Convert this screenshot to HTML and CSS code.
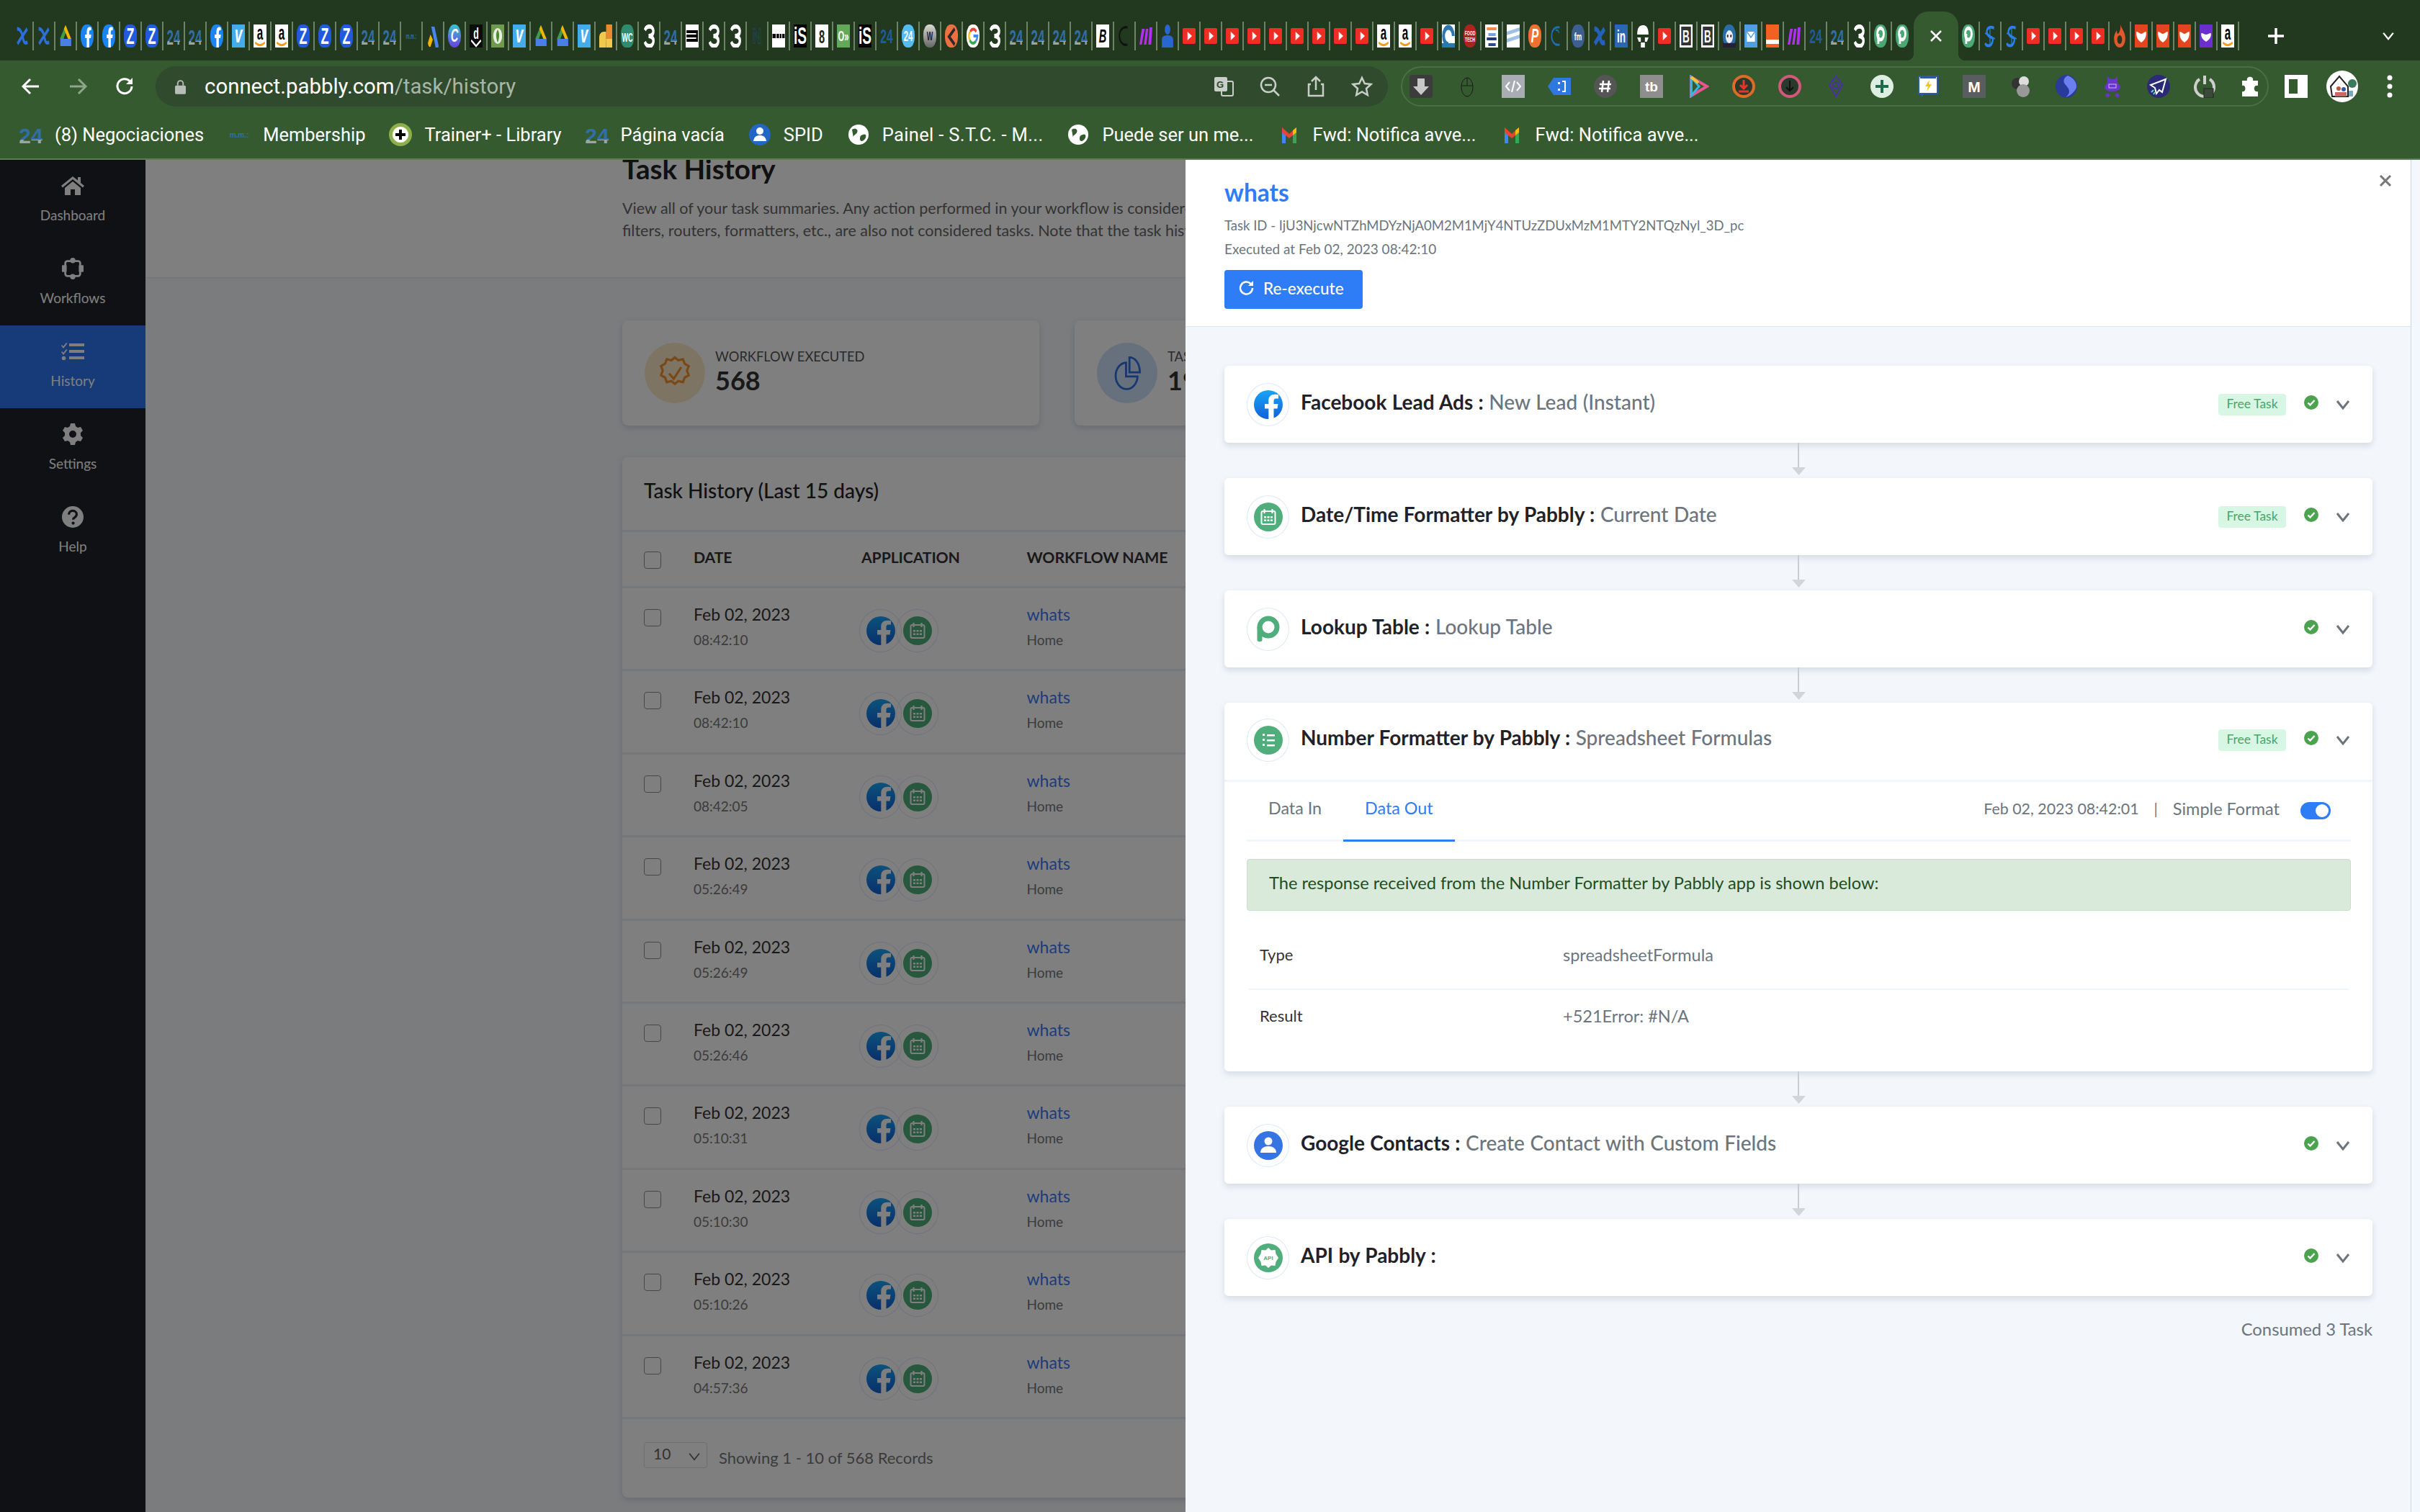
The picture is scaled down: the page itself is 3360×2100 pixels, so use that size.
FILE: index.html
```html
<!DOCTYPE html>
<html lang="en">
<head>
<meta charset="utf-8">
<title>Task History</title>
<link rel="stylesheet" href="styles.css">
</head>
<body>
<svg class="sprite" aria-hidden="true">
<defs>
<linearGradient id="gfb" x1="0" y1="0" x2="0" y2="1"><stop offset="0" stop-color="#18a4f8"/><stop offset="1" stop-color="#1260d8"/></linearGradient>
<linearGradient id="g24" x1="0" y1="0" x2="0" y2="1"><stop offset="0.66" stop-color="#2f6ea8"/><stop offset="0.67" stop-color="#9aa6a0"/></linearGradient>
<linearGradient id="gcv" x1="0" y1="0" x2="0" y2="1"><stop offset="0" stop-color="#38c5d0"/><stop offset="1" stop-color="#6b3fe0"/></linearGradient>
<linearGradient id="gsv" x1="0" y1="0" x2="0" y2="1"><stop offset="0" stop-color="#d8d8d8"/><stop offset="1" stop-color="#666"/></linearGradient>
<symbol id="xp" viewBox="0 0 32 32" preserveAspectRatio="none"><path d="M3 6c10 0 13 8 15 14s5 6 11 5M28 6C20 13 11 20 4 27" fill="none" stroke="#2c6fd9" stroke-width="5"/></symbol>
<symbol id="drive" viewBox="0 0 32 32" preserveAspectRatio="none"><path d="M16 1 2 20h9L20 6z" fill="#3f9b45"/><path d="M16 1 30 20h-8L12 6z" fill="#f4b400"/><path d="M3 20H30V30H3z" fill="#4a7fe8"/></symbol>
<symbol id="fb" viewBox="0 0 32 32" preserveAspectRatio="none"><rect width="32" height="32" rx="14" fill="#1b84f2"/><path d="M21 32V19h4l1-5h-5v-3c0-2 1-3 3-3h2V4c-1 0-3-.4-4-.4-4 0-7 2.400-7 7V14h-4v5h4v13z" fill="#fff"/></symbol>
<symbol id="zz" viewBox="0 0 32 32" preserveAspectRatio="none"><rect width="32" height="32" rx="12" fill="#2259df"/><text x="16" y="27" class="sb" font-size="32" text-anchor="middle" fill="#fff">Z</text></symbol>
<symbol id="b24" viewBox="0 0 32 32" preserveAspectRatio="none"><text x="16" y="28" class="sb" font-size="30" text-anchor="middle" fill="url(#g24)">24</text></symbol>
<symbol id="vv" viewBox="0 0 32 32" preserveAspectRatio="none"><rect width="32" height="32" fill="#45acea"/><text x="16" y="25" class="sb si" font-size="34" text-anchor="middle" fill="#fff">v</text></symbol>
<symbol id="amz" viewBox="0 0 32 32" preserveAspectRatio="none"><rect width="32" height="32" fill="#fff"/><text x="16" y="21" class="sb" font-size="27" text-anchor="middle" fill="#000">a</text><path d="M4 25c8 5 16 5 24 0" fill="none" stroke="#f29b1c" stroke-width="3"/></symbol>
<symbol id="mm" viewBox="0 0 32 32" preserveAspectRatio="none"><text x="16" y="20" class="sb" font-size="10" text-anchor="middle" fill="#2f6ea8">m.m.:</text></symbol>
<symbol id="ads" viewBox="0 0 32 32" preserveAspectRatio="none"><path d="M10 31a5 5 0 0 1-5-8l5-9 6 7-6 10z" fill="#f4b400"/><path d="M12 3h8l10 26a4 4 0 0 1-8 1z" fill="#4a85ea"/></symbol>
<symbol id="canva" viewBox="0 0 32 32" preserveAspectRatio="none"><rect width="32" height="32" rx="15" fill="url(#gcv)"/><text x="16" y="24" class="sb si" font-size="26" text-anchor="middle" fill="#fff">C</text></symbol>
<symbol id="dd" viewBox="0 0 32 32" preserveAspectRatio="none"><rect width="32" height="32" fill="#0c0c0c"/><text x="16" y="20" class="sb" font-size="22" text-anchor="middle" fill="#fff">d</text><path d="M4 22l12 8 12-8" fill="none" stroke="#fff" stroke-width="3"/></symbol>
<symbol id="leaf" viewBox="0 0 32 32" preserveAspectRatio="none"><rect width="32" height="32" fill="#6d9a4c"/><circle cx="16" cy="16" r="11" fill="#e8efe0"/><path d="M16 7c5 5 5 11 0 18-5-7-5-13 0-18z" fill="#4f8a30"/></symbol>
<symbol id="ana" viewBox="0 0 32 32" preserveAspectRatio="none"><rect x="17" width="15" height="24" fill="#ea8a2e"/><path d="M0 32V18c0-5 5-8 12-8h5v22z" fill="#f2c94c"/><rect x="17" y="20" width="15" height="12" fill="#f2c94c"/></symbol>
<symbol id="wc" viewBox="0 0 32 32" preserveAspectRatio="none"><rect width="32" height="32" rx="12" fill="#2f8a6e"/><text x="16" y="24" class="sb" font-size="16" text-anchor="middle" fill="#fff">WC</text></symbol>
<symbol id="three" viewBox="0 0 32 32" preserveAspectRatio="none"><path d="M6 8C10 1 26 1 27 9c0 5-5 7-12 7 8 0 13 3 12 8-2 8-17 8-21 0" fill="none" stroke="#fff" stroke-width="6"/></symbol>
<symbol id="lines" viewBox="0 0 32 32" preserveAspectRatio="none"><rect width="32" height="32" fill="#fff"/><path d="M2 8h28v4H2zM2 14h28v4H2zM2 20h28v4H2z" fill="#000"/><rect x="26" y="8" width="4" height="16" fill="#000"/></symbol>
<symbol id="nn" viewBox="0 0 32 32" preserveAspectRatio="none"><text x="16" y="26" class="sb" font-size="30" text-anchor="middle" fill="none" stroke="#1f4a6e">N</text></symbol>
<symbol id="bars" viewBox="0 0 32 32" preserveAspectRatio="none"><rect width="32" height="32" fill="#fff"/><path d="M1 13h8v6H1zM11 13h6v6h-6zM19 13h4v6h-4zM25 13h6v6h-6z" fill="#000"/></symbol>
<symbol id="is" viewBox="0 0 32 32" preserveAspectRatio="none"><rect width="32" height="32" fill="#000"/><text x="16" y="27" class="sb" font-size="34" text-anchor="middle" fill="#fff">iS</text></symbol>
<symbol id="eight" viewBox="0 0 32 32" preserveAspectRatio="none"><rect width="32" height="32" fill="#fff"/><text x="16" y="26" class="sb" font-size="26" text-anchor="middle" fill="#222">8</text></symbol>
<symbol id="gp" viewBox="0 0 32 32" preserveAspectRatio="none"><rect width="32" height="32" fill="#63a95a"/><text x="16" y="23" class="sb" font-size="20" text-anchor="middle" fill="#fff">O»</text></symbol>
<symbol id="q24" viewBox="0 0 32 32" preserveAspectRatio="none"><text x="16" y="26" class="sb" font-size="28" text-anchor="middle" fill="#1d5c9c">24</text></symbol>
<symbol id="lb24" viewBox="0 0 32 32" preserveAspectRatio="none"><rect width="32" height="32" rx="14" fill="#54bcf0"/><text x="16" y="23" class="sb" font-size="20" text-anchor="middle" fill="#fff">24</text></symbol>
<symbol id="silver" viewBox="0 0 32 32" preserveAspectRatio="none"><rect width="32" height="32" rx="14" fill="url(#gsv)"/><text x="16" y="22" class="sb" font-size="16" text-anchor="middle" fill="#222">W</text></symbol>
<symbol id="kk" viewBox="0 0 32 32" preserveAspectRatio="none"><rect width="32" height="32" rx="14" fill="#ee7040"/><path d="M24 6 10 17l14 11" fill="none" stroke="#2a2a2a" stroke-width="5"/></symbol>
<symbol id="gg" viewBox="0 0 32 32" preserveAspectRatio="none"><rect width="32" height="32" rx="14" fill="#fff"/><path d="M9 10a10 10 0 0 1 15 0" fill="none" stroke="#ea4335" stroke-width="4"/><path d="M8 10a10 10 0 0 0 0 12" fill="none" stroke="#fbbc05" stroke-width="4"/><path d="M8 22a10 10 0 0 0 15 1" fill="none" stroke="#34a853" stroke-width="4"/><path d="M17 16h10a10 10 0 0 1-4 7" fill="none" stroke="#4285f4" stroke-width="4"/></symbol>
<symbol id="bb" viewBox="0 0 32 32" preserveAspectRatio="none"><rect width="32" height="32" fill="#fff"/><text x="16" y="25" class="sb si" font-size="26" text-anchor="middle" fill="#000">B</text></symbol>
<symbol id="cdark" viewBox="0 0 32 32" preserveAspectRatio="none"><path d="M24 4C10 2 4 10 4 16s6 14 20 12" fill="none" stroke="#111" stroke-width="3"/></symbol>
<symbol id="make" viewBox="0 0 32 32" preserveAspectRatio="none"><path d="M6 6h7L6 28H0zM16 6h6l-5 22h-6zM25 4h7l-3 24h-7z" fill="#b030f0"/></symbol>
<symbol id="person" viewBox="0 0 32 32" preserveAspectRatio="none"><circle cx="16" cy="7" r="7" fill="#2a66d0"/><path d="M2 32V22c0-5 4-7 14-7s14 2 14 7v10z" fill="#2a66d0"/></symbol>
<symbol id="yt" viewBox="0 0 32 32" preserveAspectRatio="none"><rect y="5" width="32" height="22" rx="3" fill="#ee2e24"/><path d="M12 10 23 16 12 22z" fill="#fff"/></symbol>
<symbol id="bw" viewBox="0 0 32 32" preserveAspectRatio="none"><rect width="32" height="32" fill="#fff"/><path d="M28 16a12 12 0 1 0-12 12" fill="none" stroke="#2c77b0" stroke-width="7"/><rect y="26" width="32" height="6" fill="#2c77b0"/></symbol>
<symbol id="food" viewBox="0 0 32 32" preserveAspectRatio="none"><rect width="32" height="32" rx="14" fill="#a8261f"/><text x="16" y="15" class="sb" font-size="9" text-anchor="middle" fill="#fff">FOOD</text><text x="16" y="24" class="sb" font-size="9" text-anchor="middle" fill="#fff">TECH</text></symbol>
<symbol id="stripes" viewBox="0 0 32 32" preserveAspectRatio="none"><rect width="32" height="32" fill="#fff"/><path d="M4 4h24v4H4z" fill="#ee8a4a"/><path d="M8 12h18v4H8z" fill="#7aa0d8"/><path d="M4 18h24v4H4z" fill="#1f3a7a"/><path d="M8 26h18v4H8z" fill="#2a4a90"/></symbol>
<symbol id="stripes2" viewBox="0 0 32 32" preserveAspectRatio="none"><rect width="32" height="32" fill="#fff"/><path d="M0 10 32 4v5L0 15zM0 20l32-6v5L0 25z" fill="#9cc0e6"/></symbol>
<symbol id="pp" viewBox="0 0 32 32" preserveAspectRatio="none"><rect width="32" height="32" rx="14" fill="#ef7031"/><text x="16" y="25" class="sb si" font-size="28" text-anchor="middle" fill="#fff">P</text></symbol>
<symbol id="cblue" viewBox="0 0 32 32" preserveAspectRatio="none"><path d="M24 4C10 2 4 10 4 16s6 14 20 12" fill="none" stroke="#1d6fb0" stroke-width="3"/><path d="M14 8c6-1 8 2 8 4" fill="none" stroke="#1d6fb0" stroke-width="2"/></symbol>
<symbol id="fm" viewBox="0 0 32 32" preserveAspectRatio="none"><rect width="32" height="32" rx="14" fill="#3c5f8f"/><text x="16" y="22" class="sb" font-size="15" text-anchor="middle" fill="#fff">fm</text></symbol>
<symbol id="xp2" viewBox="0 0 32 32" preserveAspectRatio="none"><path d="M3 6c10 0 13 8 15 14s5 6 11 5M28 6C20 13 11 20 4 27" fill="none" stroke="#2561b8" stroke-width="7"/></symbol>
<symbol id="lin" viewBox="0 0 32 32" preserveAspectRatio="none"><rect width="32" height="32" fill="#2a67b2"/><text x="16" y="25" class="sb" font-size="24" text-anchor="middle" fill="#fff">in</text></symbol>
<symbol id="ninja" viewBox="0 0 32 32" preserveAspectRatio="none"><path d="M2 14C2 4 8 1 16 1s14 3 14 13z" fill="#fff"/><path d="M2 18h9v6h-5zM21 18h9l-4 6h-5zM11 25h10v7H11z" fill="#fff"/></symbol>
<symbol id="bbox" viewBox="0 0 32 32" preserveAspectRatio="none"><rect width="32" height="32" fill="#fff"/><rect x="4" y="3" width="24" height="26" fill="#333"/><text x="16" y="25" class="sb" font-size="24" text-anchor="middle" fill="#fff">B</text></symbol>
<symbol id="face" viewBox="0 0 32 32" preserveAspectRatio="none"><rect width="32" height="32" rx="15" fill="#2a6ea8"/><circle cx="16" cy="17" r="9" fill="#eef"/><circle cx="12" cy="16" r="2" fill="#333"/><circle cx="20" cy="16" r="2" fill="#333"/><rect y="26" width="32" height="6" fill="#223"/></symbol>
<symbol id="mail" viewBox="0 0 32 32" preserveAspectRatio="none"><rect width="32" height="32" fill="#4f9fe0"/><rect x="6" y="10" width="20" height="14" fill="#fff"/><path d="M6 10l10 8 10-8" fill="none" stroke="#4f9fe0" stroke-width="2"/></symbol>
<symbol id="orblock" viewBox="0 0 32 32" preserveAspectRatio="none"><rect width="32" height="32" fill="#f26022"/><rect y="21" width="32" height="6" fill="#fff"/></symbol>
<symbol id="pg" viewBox="0 0 32 32" preserveAspectRatio="none"><rect width="32" height="32" rx="14" fill="#4aa874"/><circle cx="16" cy="13" r="8" fill="none" stroke="#fff" stroke-width="5"/><rect x="8" y="13" width="5" height="14" fill="#fff"/></symbol>
<symbol id="swirl" viewBox="0 0 32 32" preserveAspectRatio="none"><path d="M26 5C12 1 4 8 10 14s16 2 12 10S6 30 4 26" fill="none" stroke="#2a80e4" stroke-width="4"/><path d="M16 2v28M4 12l24 8" fill="none" stroke="#2a80e4" stroke-width="2"/></symbol>
<symbol id="fire" viewBox="0 0 32 32" preserveAspectRatio="none"><path d="M18 0c4 8 12 10 12 20a14 12 0 0 1-28 0c0-6 4-9 7-12 0 3 1 5 3 5 4-2 7-7 6-13z" fill="#e2572c"/><circle cx="16" cy="21" r="6" fill="#22381f"/></symbol>
<symbol id="heart" viewBox="0 0 32 32" preserveAspectRatio="none"><rect width="32" height="32" fill="#e4451f"/><path d="M4 10c5 0 8 3 12 3s7-3 12-3c1 8-4 12-12 15C8 22 3 18 4 10z" fill="#fff"/></symbol>
<symbol id="vheart" viewBox="0 0 32 32" preserveAspectRatio="none"><rect width="32" height="32" fill="#6b2fd0"/><path d="M4 12c5 0 8 2 12 2s7-2 12-2c1 6-4 9-12 12C8 21 3 18 4 12z" fill="#fff"/></symbol>
<symbol id="gm" viewBox="0 0 32 32"><path d="M6 6v22h5V14z" fill="#4285f4"/><path d="M26 6v22h-5V14z" fill="#34a853"/><path d="M6 6l10 9L26 6v7l-10 8-10-8z" fill="#ea4335"/><path d="M21 10l5-4v7l-5 4z" fill="#fbbc05"/></symbol>
<symbol id="globe" viewBox="0 0 32 32"><circle cx="16" cy="16" r="14" fill="#fff"/><path d="M7 9c5-3 9 0 7 4s-6 3-5 8M22 16c4-2 6 2 3 6s-7 4-7 0 1-5 4-6z" fill="#365a30"/></symbol>
<symbol id="fbc" viewBox="0 0 40 40"><circle cx="20" cy="20" r="20" fill="url(#gfb)"/><path d="M27.500 40V25.500h5l1-6.500h-6v-4c0-2 .9-3.400 3.500-3.400h3V6.300C33 6.100 31 5.800 29 5.800c-5.300 0-8.700 3-8.700 8.500V19H15v6.500h5.300V40z" fill="#fff"/></symbol>
<symbol id="calc" viewBox="0 0 40 40"><circle cx="20" cy="20" r="20" fill="#4fae7b"/><rect x="10.500" y="12" width="19" height="18" rx="2" fill="none" stroke="#fff" stroke-width="2"/><path d="M14.500 9v6M25.500 9v6" stroke="#fff" stroke-width="2.200"/><path d="M14 19h3v2.500h-3zM18.500 19h3v2.500h-3zM23 19h3v2.500h-3zM14 23.500h3V26h-3zM18.500 23.500h3V26h-3zM23 23.500h3V26h-3z" fill="#fff"/></symbol>
<symbol id="lookup" viewBox="0 0 40 40"><circle cx="20" cy="17" r="12" fill="none" stroke="#4fae7b" stroke-width="7"/><path d="M4.500 17v18c0 3 7 3 7 0V17z" fill="#4fae7b"/></symbol>
<symbol id="numf" viewBox="0 0 40 40"><circle cx="20" cy="20" r="20" fill="#4fae7b"/><path d="M18 12h11v2.500H18zM18 19h11v2.500H18zM18 26h11v2.500H18zM12 11h3v3h-3zM12 18h3v3h-3zM12 25h3v3h-3z" fill="#fff"/></symbol>
<symbol id="gcon" viewBox="0 0 40 40"><circle cx="20" cy="20" r="20" fill="#3574e2"/><circle cx="20" cy="14" r="5.500" fill="#fff"/><path d="M9 30c0-6 5-9 11-9s11 3 11 9z" fill="#fff"/></symbol>
<symbol id="api" viewBox="0 0 40 40"><circle cx="20" cy="20" r="20" fill="#4fae7b"/><path d="M20 6l4 3.500 5.500-.5 1 5.500 3.500 5.500-3.500 5.500-1 5.500-5.500-.5-4 3.500-4-3.500-5.500.5-1-5.500L6 20l3.500-5.500 1-5.500 5.500.5z" fill="#fff"/><text x="20" y="23" class="sb" font-size="8" text-anchor="middle" fill="#4fae7b">API</text></symbol>
<symbol id="ok" viewBox="0 0 20 20"><circle cx="10" cy="10" r="10" fill="#4ba34f"/><path d="M5.500 10.500l3 3 6-6.500" fill="none" stroke="#fff" stroke-width="2.400"/></symbol>
<symbol id="chev" viewBox="0 0 20 14"><path d="M2 2l8 10 8-10" fill="none" stroke="#6c757d" stroke-width="3"/></symbol>
</defs>
</svg>

<div class="app">
  <div class="tabstrip">
    <span class="tab"><svg class="fav"><use href="#xp"/></svg></span>
    <span class="tab"><svg class="fav"><use href="#xp"/></svg></span>
    <span class="tab"><svg class="fav"><use href="#drive"/></svg></span>
    <span class="tab"><svg class="fav"><use href="#fb"/></svg></span>
    <span class="tab"><svg class="fav"><use href="#fb"/></svg></span>
    <span class="tab"><svg class="fav"><use href="#zz"/></svg></span>
    <span class="tab"><svg class="fav"><use href="#zz"/></svg></span>
    <span class="tab"><svg class="fav"><use href="#b24"/></svg></span>
    <span class="tab"><svg class="fav"><use href="#b24"/></svg></span>
    <span class="tab"><svg class="fav"><use href="#fb"/></svg></span>
    <span class="tab"><svg class="fav"><use href="#vv"/></svg></span>
    <span class="tab"><svg class="fav"><use href="#amz"/></svg></span>
    <span class="tab"><svg class="fav"><use href="#amz"/></svg></span>
    <span class="tab"><svg class="fav"><use href="#zz"/></svg></span>
    <span class="tab"><svg class="fav"><use href="#zz"/></svg></span>
    <span class="tab"><svg class="fav"><use href="#zz"/></svg></span>
    <span class="tab"><svg class="fav"><use href="#b24"/></svg></span>
    <span class="tab"><svg class="fav"><use href="#b24"/></svg></span>
    <span class="tab"><svg class="fav"><use href="#mm"/></svg></span>
    <span class="tab"><svg class="fav"><use href="#ads"/></svg></span>
    <span class="tab"><svg class="fav"><use href="#canva"/></svg></span>
    <span class="tab"><svg class="fav"><use href="#dd"/></svg></span>
    <span class="tab"><svg class="fav"><use href="#leaf"/></svg></span>
    <span class="tab"><svg class="fav"><use href="#vv"/></svg></span>
    <span class="tab"><svg class="fav"><use href="#drive"/></svg></span>
    <span class="tab"><svg class="fav"><use href="#drive"/></svg></span>
    <span class="tab"><svg class="fav"><use href="#vv"/></svg></span>
    <span class="tab"><svg class="fav"><use href="#ana"/></svg></span>
    <span class="tab"><svg class="fav"><use href="#wc"/></svg></span>
    <span class="tab"><svg class="fav"><use href="#three"/></svg></span>
    <span class="tab"><svg class="fav"><use href="#b24"/></svg></span>
    <span class="tab"><svg class="fav"><use href="#lines"/></svg></span>
    <span class="tab"><svg class="fav"><use href="#three"/></svg></span>
    <span class="tab"><svg class="fav"><use href="#three"/></svg></span>
    <span class="tab"><svg class="fav"><use href="#nn"/></svg></span>
    <span class="tab"><svg class="fav"><use href="#bars"/></svg></span>
    <span class="tab"><svg class="fav"><use href="#is"/></svg></span>
    <span class="tab"><svg class="fav"><use href="#eight"/></svg></span>
    <span class="tab"><svg class="fav"><use href="#gp"/></svg></span>
    <span class="tab"><svg class="fav"><use href="#is"/></svg></span>
    <span class="tab"><svg class="fav"><use href="#q24"/></svg></span>
    <span class="tab"><svg class="fav"><use href="#lb24"/></svg></span>
    <span class="tab"><svg class="fav"><use href="#silver"/></svg></span>
    <span class="tab"><svg class="fav"><use href="#kk"/></svg></span>
    <span class="tab"><svg class="fav"><use href="#gg"/></svg></span>
    <span class="tab"><svg class="fav"><use href="#three"/></svg></span>
    <span class="tab"><svg class="fav"><use href="#b24"/></svg></span>
    <span class="tab"><svg class="fav"><use href="#b24"/></svg></span>
    <span class="tab"><svg class="fav"><use href="#b24"/></svg></span>
    <span class="tab"><svg class="fav"><use href="#b24"/></svg></span>
    <span class="tab"><svg class="fav"><use href="#bb"/></svg></span>
    <span class="tab"><svg class="fav"><use href="#cdark"/></svg></span>
    <span class="tab"><svg class="fav"><use href="#make"/></svg></span>
    <span class="tab"><svg class="fav"><use href="#person"/></svg></span>
    <span class="tab"><svg class="fav"><use href="#yt"/></svg></span>
    <span class="tab"><svg class="fav"><use href="#yt"/></svg></span>
    <span class="tab"><svg class="fav"><use href="#yt"/></svg></span>
    <span class="tab"><svg class="fav"><use href="#yt"/></svg></span>
    <span class="tab"><svg class="fav"><use href="#yt"/></svg></span>
    <span class="tab"><svg class="fav"><use href="#yt"/></svg></span>
    <span class="tab"><svg class="fav"><use href="#yt"/></svg></span>
    <span class="tab"><svg class="fav"><use href="#yt"/></svg></span>
    <span class="tab"><svg class="fav"><use href="#yt"/></svg></span>
    <span class="tab"><svg class="fav"><use href="#amz"/></svg></span>
    <span class="tab"><svg class="fav"><use href="#amz"/></svg></span>
    <span class="tab"><svg class="fav"><use href="#yt"/></svg></span>
    <span class="tab"><svg class="fav"><use href="#bw"/></svg></span>
    <span class="tab"><svg class="fav"><use href="#food"/></svg></span>
    <span class="tab"><svg class="fav"><use href="#stripes"/></svg></span>
    <span class="tab"><svg class="fav"><use href="#stripes2"/></svg></span>
    <span class="tab"><svg class="fav"><use href="#pp"/></svg></span>
    <span class="tab"><svg class="fav"><use href="#cblue"/></svg></span>
    <span class="tab"><svg class="fav"><use href="#fm"/></svg></span>
    <span class="tab"><svg class="fav"><use href="#xp2"/></svg></span>
    <span class="tab"><svg class="fav"><use href="#lin"/></svg></span>
    <span class="tab"><svg class="fav"><use href="#ninja"/></svg></span>
    <span class="tab"><svg class="fav"><use href="#yt"/></svg></span>
    <span class="tab"><svg class="fav"><use href="#bbox"/></svg></span>
    <span class="tab"><svg class="fav"><use href="#bbox"/></svg></span>
    <span class="tab"><svg class="fav"><use href="#face"/></svg></span>
    <span class="tab"><svg class="fav"><use href="#mail"/></svg></span>
    <span class="tab"><svg class="fav"><use href="#orblock"/></svg></span>
    <span class="tab"><svg class="fav"><use href="#make"/></svg></span>
    <span class="tab"><svg class="fav"><use href="#q24"/></svg></span>
    <span class="tab"><svg class="fav"><use href="#b24"/></svg></span>
    <span class="tab"><svg class="fav"><use href="#three"/></svg></span>
    <span class="tab"><svg class="fav"><use href="#pg"/></svg></span>
    <span class="tab tab-last-before"><svg class="fav"><use href="#pg"/></svg></span>
    <span class="tab-active"><svg class="tab-x" viewBox="0 0 20 20"><path d="M3 3l14 14M17 3 3 17"/></svg></span>
    <span class="tab"><svg class="fav"><use href="#pg"/></svg></span>
    <span class="tab"><svg class="fav"><use href="#swirl"/></svg></span>
    <span class="tab"><svg class="fav"><use href="#swirl"/></svg></span>
    <span class="tab"><svg class="fav"><use href="#yt"/></svg></span>
    <span class="tab"><svg class="fav"><use href="#yt"/></svg></span>
    <span class="tab"><svg class="fav"><use href="#yt"/></svg></span>
    <span class="tab"><svg class="fav"><use href="#yt"/></svg></span>
    <span class="tab"><svg class="fav"><use href="#fire"/></svg></span>
    <span class="tab"><svg class="fav"><use href="#heart"/></svg></span>
    <span class="tab"><svg class="fav"><use href="#heart"/></svg></span>
    <span class="tab"><svg class="fav"><use href="#heart"/></svg></span>
    <span class="tab"><svg class="fav"><use href="#vheart"/></svg></span>
    <span class="tab"><svg class="fav"><use href="#amz"/></svg></span>
    <svg class="new-tab" viewBox="0 0 24 24"><path d="M12 1v22M1 12h22"/></svg>
    <svg class="tab-caret" viewBox="0 0 20 14"><path d="M2 2l8 10 8-10"/></svg>
  </div>

  <div class="toolbar">
    <svg class="nav" viewBox="0 0 28 28"><path d="M25 14H4M13 4 3 14l10 10"/></svg>
    <svg class="nav nav-off" viewBox="0 0 28 28"><path d="M3 14h21M15 4l10 10-10 10"/></svg>
    <svg class="nav" viewBox="0 0 28 28"><path d="M24 14a10 10 0 1 1-3-7.500"/><path class="nav-fill" d="M25 2v9h-9z"/></svg>
    <div class="omnibox">
      <svg class="lock" viewBox="0 0 16 22"><path d="M4 9V6a4 4 0 0 1 8 0v3" fill="none" stroke="#b9bdb8" stroke-width="2"/><rect y="9" width="16" height="13" rx="2" fill="#b9bdb8"/></svg>
      <span class="url">connect.pabbly.com<span class="url-path">/task/history</span></span>
      <div class="omni-icons">
        <svg class="oi" viewBox="0 0 30 30"><rect x="2" y="2" width="18" height="20" rx="2" fill="#c9cec8"/><rect x="12" y="8" width="16" height="20" rx="2" fill="none" stroke="#c9cec8" stroke-width="2"/><text x="10" y="17" class="sb" font-size="13" text-anchor="middle" fill="#2f4a2c">G</text></svg>
        <svg class="oi ol" viewBox="0 0 30 30"><circle cx="13" cy="13" r="10"/><path d="M20 20l8 8M8 13h10"/></svg>
        <svg class="oi ol" viewBox="0 0 30 30"><path d="M8 12H5v16h20V12h-3M15 20V3M9 8l6-6 6 6"/></svg>
        <svg class="oi ol" viewBox="0 0 30 30"><path d="M15 3l3.800 8 8.700 1-6.500 6 1.800 9L15 22.500 7.200 27 9 18l-6.500-6 8.700-1z"/></svg>
      </div>
    </div>
    <div class="ext-pill">
      <svg class="ext" viewBox="0 0 32 32"><rect width="32" height="32" rx="3" fill="#3c3c3c"/><path d="M11 5h10v11h6L16 28 5 16h6z" fill="#c8c8c8"/></svg>
      <svg class="ext" viewBox="0 0 32 32"><ellipse cx="16" cy="17" rx="8" ry="13" fill="none" stroke="#1a1a1a"/><path d="M8 15h16M16 4v11" stroke="#1a1a1a" fill="none"/></svg>
      <svg class="ext" viewBox="0 0 32 32"><rect width="32" height="32" fill="#a9adb3"/><path d="M11 10l-5 6 5 6M21 10l5 6-5 6M18 8l-4 16" fill="none" stroke="#fff" stroke-width="2"/></svg>
      <svg class="ext" viewBox="0 0 32 32"><path d="M8 4h24v24H8L0 16z" fill="#2f78e0"/><path d="M14 10h3v3h-3zM14 19h3v3h-3zM20 8h5v16h-5v-2h3V10h-3z" fill="#fff"/></svg>
      <svg class="ext" viewBox="0 0 32 32"><circle cx="16" cy="16" r="16" fill="#555"/><path d="M13 8l-2 16M21 8l-2 16M8 13h16M7 19h16" stroke="#fff" stroke-width="2.500" fill="none"/></svg>
      <svg class="ext" viewBox="0 0 32 32"><rect width="32" height="32" fill="#8e8e8e"/><text x="16" y="23" class="sb" font-size="19" text-anchor="middle" fill="#fff">tb</text></svg>
      <svg class="ext" viewBox="0 0 32 32"><path d="M7 3l22 13L7 29z" fill="none" stroke="#e8558f" stroke-width="4"/><path d="M7 3l11 13L7 29z" fill="none" stroke="#35b6e0" stroke-width="3"/><path d="M7 3l10 8" stroke="#f5c53a" stroke-width="4"/></svg>
      <svg class="ext" viewBox="0 0 32 32"><circle cx="16" cy="16" r="14" fill="#2a3a2a" stroke="#e06a2a" stroke-width="4"/><path d="M16 7v11M11 14l5 5 5-5M9 23h14" fill="none" stroke="#e8342a" stroke-width="3"/></svg>
      <svg class="ext" viewBox="0 0 32 32"><circle cx="16" cy="16" r="14" fill="#2a3a2a" stroke="#d4587a" stroke-width="4"/><path d="M16 8v14M11 17l5 5 5-5" fill="none" stroke="#111" stroke-width="2"/></svg>
      <svg class="ext" viewBox="0 0 32 32"><path d="M16 2l9 12-9 16L7 14z" fill="none" stroke="#4a2fa8" stroke-width="2"/><circle cx="16" cy="15" r="4" fill="none" stroke="#4a2fa8" stroke-width="2"/></svg>
      <svg class="ext" viewBox="0 0 32 32"><circle cx="16" cy="16" r="16" fill="#dfeee2"/><path d="M16 7v18M7 16h18" stroke="#1f6a4a" stroke-width="4"/></svg>
      <svg class="ext" viewBox="0 0 32 32"><rect x="3" y="2" width="26" height="24" fill="#fff" stroke="#2a5aa8" stroke-width="2"/><path d="M5 2h22v3H5zM5 26l2 5 3-5z" fill="#2a5aa8"/><path d="M18 7l-6 9h4l-2 7 7-10h-4z" fill="#f2c418"/></svg>
      <svg class="ext" viewBox="0 0 32 32"><rect width="32" height="32" fill="#5a5d60"/><text x="16" y="24" class="sb" font-size="21" text-anchor="middle" fill="#fff">M</text></svg>
      <svg class="ext" viewBox="0 0 32 32"><circle cx="12" cy="12" r="8" fill="#333"/><circle cx="21" cy="9" r="7" fill="#ddd"/><circle cx="20" cy="22" r="9" fill="#999"/></svg>
      <svg class="ext" viewBox="0 0 32 32"><ellipse cx="16" cy="16" rx="15" ry="16" fill="#2a3a9a"/><path d="M18 1c8 3 13 10 12 16s-10 13-15 14c8-6 5-12 0-17s-2-11 3-13z" fill="#6a80f0"/></svg>
      <svg class="ext" viewBox="0 0 32 32"><path d="M9 2l4 4h6l4-4v9c3 2 4 5 4 7s-5 5-11 5-11-3-11-5 1-5 4-7z" fill="#6a35c8"/><rect x="11" y="13" width="10" height="5" fill="none" stroke="#c8b8f0"/><path d="M9 25l4 3-4 4-3-4zM23 25l3 3-3 4-4-4z" fill="#6a35c8"/></svg>
      <svg class="ext" viewBox="0 0 32 32"><circle cx="16" cy="16" r="16" fill="#2a2a78"/><path d="M26 6 5 14l6 4 2 8 4-5 4 3z" fill="none" stroke="#fff" stroke-width="2"/><path d="M6 24l3-3M9 27l2-3" stroke="#5ae0c0" stroke-width="2"/></svg>
      <svg class="ext" viewBox="0 0 32 32"><path d="M9 6a13 13 0 1 0 14 0" fill="none" stroke="#cfcfcf" stroke-width="4"/><path d="M16 1v12" stroke="#cfcfcf" stroke-width="4"/><rect x="15" y="19" width="13" height="13" fill="#3a4a38" stroke="#222"/></svg>
      <svg class="ext" viewBox="0 0 32 32"><path d="M4 8h7c-2-7 10-7 8 0h7v7c-7-2-7 10 0 8v7H4v-7c6 2 6-10 0-8z" fill="#fff"/></svg>
    </div>
    <svg class="ext after" viewBox="0 0 32 32"><path d="M3 3h26v26H3z" fill="none" stroke="#fff" stroke-width="6"/><rect x="18" y="4" width="10" height="24" fill="#fff"/></svg>
    <svg class="avatar" viewBox="0 0 44 44"><circle cx="22" cy="22" r="22" fill="#fff"/><path d="M6 22 18 8l12 14v14H8z" fill="none" stroke="#222" stroke-width="2"/><circle cx="36" cy="18" r="6" fill="#3a7a5a"/><circle cx="17" cy="25" r="3" fill="#b54"/><circle cx="24" cy="26" r="3" fill="#35a"/><path d="M12 36h16v-6H12z" fill="#c66"/><path d="M31 28h6v8h-6z" fill="#7ab"/></svg>
    <svg class="dots" viewBox="0 0 8 32"><circle cx="4" cy="4" r="3.500"/><circle cx="4" cy="16" r="3.500"/><circle cx="4" cy="28" r="3.500"/></svg>
  </div>

  <div class="bookmarks">
    <a class="bm"><svg class="bm-i"><use href="#b24"/></svg>(8) Negociaciones</a>
    <a class="bm"><svg class="bm-i"><use href="#mm"/></svg>Membership</a>
    <a class="bm"><svg class="bm-i" viewBox="0 0 32 32"><circle cx="16" cy="16" r="16" fill="#8db04c"/><circle cx="16" cy="16" r="11" fill="#fff"/><path d="M16 9v14M9 16h14" stroke="#000" stroke-width="4"/></svg>Trainer+ - Library</a>
    <a class="bm"><svg class="bm-i"><use href="#b24"/></svg>Página vacía</a>
    <a class="bm"><svg class="bm-i" viewBox="0 0 32 32"><circle cx="16" cy="16" r="15" fill="#2466c4"/><circle cx="16" cy="11" r="5" fill="#fff"/><path d="M7 25c1-6 4-8 9-8s8 2 9 8z" fill="#fff"/></svg>SPID</a>
    <a class="bm bm-wide"><svg class="bm-i"><use href="#globe"/></svg>Painel - S.T.C. - M...</a>
    <a class="bm"><svg class="bm-i"><use href="#globe"/></svg>Puede ser un me...</a>
    <a class="bm"><svg class="bm-i"><use href="#gm"/></svg>Fwd: Notifica avve...</a>
    <a class="bm"><svg class="bm-i"><use href="#gm"/></svg>Fwd: Notifica avve...</a>
  </div>

  <div class="stage">
    <nav class="sidebar">
      <a class="side-item">
        <svg class="side-i" viewBox="0 0 32 26"><path d="M16 0 0 13l2 2.500L16 4l14 11.500 2-2.500-5-4V1h-4v4.500z"/><path d="M5 16 16 7l11 9v10h-8v-8h-6v8H5z"/></svg>
        <span>Dashboard</span>
      </a>
      <a class="side-item">
        <svg class="side-i" viewBox="0 0 32 32"><path d="M8 5h16a3 3 0 0 1 3 3v16a3 3 0 0 1-3 3H8a3 3 0 0 1-3-3V8a3 3 0 0 1 3-3z" fill="none" stroke="#fff" stroke-width="3"/><circle cx="16" cy="4" r="4"/><circle cx="16" cy="28" r="4"/><rect y="11" width="7" height="10" rx="1"/><rect x="25" y="11" width="7" height="10" rx="1"/></svg>
        <span>Workflows</span>
      </a>
      <a class="side-item side-active">
        <svg class="side-i" viewBox="0 0 32 26"><path d="M1 4l2 2 4-5 1.500 1L3 9 0 5zM1 13l2 2 4-5 1.500 1L3 18 0 14z"/><circle cx="3.500" cy="22.500" r="2.800"/><path d="M11 2h21v4H11zM11 11h21v4H11zM11 20h21v4H11z"/></svg>
        <span>History</span>
      </a>
      <a class="side-item">
        <svg class="side-i" viewBox="0 0 28 30"><path fill-rule="evenodd" d="M11 0h6l1 4 3 2 4-1 3 5-3 3v4l3 3-3 5-4-1-3 2-1 4h-6l-1-4-3-2-4 1-3-5 3-3v-4L0 10l3-5 4 1 3-2zM14 10a5 5 0 1 0 0 10 5 5 0 0 0 0-10z"/></svg>
        <span>Settings</span>
      </a>
      <a class="side-item">
        <svg class="side-i" viewBox="0 0 28 28"><circle cx="14" cy="14" r="14"/><path d="M9 11c0-3 2-5 5-5s5 2 5 4.500-1.500 3.500-3 4.500-1.500 1.500-1.500 2.500" fill="none" stroke="#202228" stroke-width="3"/><circle cx="14.500" cy="22" r="2" fill="#202228"/></svg>
        <span>Help</span>
      </a>
    </nav>

    <main class="main">
      <header class="page-head">
        <h1>Task History</h1>
        <p>View all of your task summaries. Any action performed in your workflow is considered</p>
        <p>filters, routers, formatters, etc., are also not considered tasks. Note that the task history</p>
      </header>
      <div class="content">
        <div class="stats">
          <div class="stat">
            <span class="stat-ic stat-or"><svg viewBox="0 0 48 60"><path d="M24 3l6 5 8-2 3 8 7 4-3 8 3 8-7 4-3 8-8-2-6 5-6-5-8 2-3-8-7-4 3-8-3-8 7-4 3-8 8 2z" fill="none" stroke="#f4902a" stroke-width="4"/><path d="M14 31l8 9 13-20" fill="none" stroke="#f4902a" stroke-width="4"/></svg></span>
            <div><div class="stat-l">WORKFLOW EXECUTED</div><div class="stat-v">568</div></div>
          </div>
          <div class="stat">
            <span class="stat-ic stat-bl"><svg viewBox="0 0 48 60"><path d="M22 12A19 23 0 1 0 42 36H22z" fill="none" stroke="#2f6fe0" stroke-width="3.500"/><path d="M28 3c8 0 18 8 18 26H28z" fill="none" stroke="#2f6fe0" stroke-width="3.500"/></svg></span>
            <div><div class="stat-l">TASKS</div><div class="stat-v">19</div></div>
          </div>
        </div>
        <section class="table-card">
          <h2>Task History (Last 15 days)</h2>
          <div class="row row-head"><span class="cb"></span><span>DATE</span><span class="col-app">APPLICATION</span><span>WORKFLOW NAME</span></div>
          <div class="row"><span class="cb"></span><div><div class="d">Feb 02, 2023</div><div class="t">08:42:10</div></div><div class="apps"><span class="ring"><svg><use href="#fbc"/></svg></span><span class="ring"><svg><use href="#calc"/></svg></span></div><div><a class="w">whats</a><div class="t">Home</div></div></div>
          <div class="row"><span class="cb"></span><div><div class="d">Feb 02, 2023</div><div class="t">08:42:10</div></div><div class="apps"><span class="ring"><svg><use href="#fbc"/></svg></span><span class="ring"><svg><use href="#calc"/></svg></span></div><div><a class="w">whats</a><div class="t">Home</div></div></div>
          <div class="row"><span class="cb"></span><div><div class="d">Feb 02, 2023</div><div class="t">08:42:05</div></div><div class="apps"><span class="ring"><svg><use href="#fbc"/></svg></span><span class="ring"><svg><use href="#calc"/></svg></span></div><div><a class="w">whats</a><div class="t">Home</div></div></div>
          <div class="row"><span class="cb"></span><div><div class="d">Feb 02, 2023</div><div class="t">05:26:49</div></div><div class="apps"><span class="ring"><svg><use href="#fbc"/></svg></span><span class="ring"><svg><use href="#calc"/></svg></span></div><div><a class="w">whats</a><div class="t">Home</div></div></div>
          <div class="row"><span class="cb"></span><div><div class="d">Feb 02, 2023</div><div class="t">05:26:49</div></div><div class="apps"><span class="ring"><svg><use href="#fbc"/></svg></span><span class="ring"><svg><use href="#calc"/></svg></span></div><div><a class="w">whats</a><div class="t">Home</div></div></div>
          <div class="row"><span class="cb"></span><div><div class="d">Feb 02, 2023</div><div class="t">05:26:46</div></div><div class="apps"><span class="ring"><svg><use href="#fbc"/></svg></span><span class="ring"><svg><use href="#calc"/></svg></span></div><div><a class="w">whats</a><div class="t">Home</div></div></div>
          <div class="row"><span class="cb"></span><div><div class="d">Feb 02, 2023</div><div class="t">05:10:31</div></div><div class="apps"><span class="ring"><svg><use href="#fbc"/></svg></span><span class="ring"><svg><use href="#calc"/></svg></span></div><div><a class="w">whats</a><div class="t">Home</div></div></div>
          <div class="row"><span class="cb"></span><div><div class="d">Feb 02, 2023</div><div class="t">05:10:30</div></div><div class="apps"><span class="ring"><svg><use href="#fbc"/></svg></span><span class="ring"><svg><use href="#calc"/></svg></span></div><div><a class="w">whats</a><div class="t">Home</div></div></div>
          <div class="row"><span class="cb"></span><div><div class="d">Feb 02, 2023</div><div class="t">05:10:26</div></div><div class="apps"><span class="ring"><svg><use href="#fbc"/></svg></span><span class="ring"><svg><use href="#calc"/></svg></span></div><div><a class="w">whats</a><div class="t">Home</div></div></div>
          <div class="row"><span class="cb"></span><div><div class="d">Feb 02, 2023</div><div class="t">04:57:36</div></div><div class="apps"><span class="ring"><svg><use href="#fbc"/></svg></span><span class="ring"><svg><use href="#calc"/></svg></span></div><div><a class="w">whats</a><div class="t">Home</div></div></div>
          <div class="foot">
            <span class="sel">10<svg viewBox="0 0 20 14"><path d="M2 2l8 10 8-10"/></svg></span>
            <span class="showing">Showing 1 - 10 of 568 Records</span>
          </div>
        </section>
      </div>
    </main>

    <div class="scrim"></div>

    <aside class="drawer">
      <div class="drawer-in">
        <header class="dr-head">
          <svg class="dr-x" viewBox="0 0 18 18"><path d="M2 2l14 14M16 2 2 16"/></svg>
          <div class="dr-title">whats</div>
          <div class="dr-id">Task ID - IjU3NjcwNTZhMDYzNjA0M2M1MjY4NTUzZDUxMzM1MTY2NTQzNyl_3D_pc</div>
          <div class="dr-ex">Executed at Feb 02, 2023 08:42:10</div>
          <button class="btn"><svg viewBox="0 0 24 24"><path d="M20 12a8.500 8.500 0 1 1-2.500-6"/><path class="btn-f" d="M21 2v7h-7z"/></svg>Re-execute</button>
        </header>
        <div class="dr-body">
          <article class="card">
            <div class="card-h"><span class="ring"><svg><use href="#fbc"/></svg></span><div class="ttl"><b>Facebook Lead Ads :</b> New Lead (Instant)</div><span class="free">Free Task</span><svg class="ok"><use href="#ok"/></svg><svg class="chev"><use href="#chev"/></svg></div>
          </article>
          <div class="conn"><i></i><svg viewBox="0 0 19 11"><path d="M0 0h19L9.500 11z"/></svg></div>
          <article class="card">
            <div class="card-h"><span class="ring"><svg><use href="#calc"/></svg></span><div class="ttl"><b>Date/Time Formatter by Pabbly :</b> Current Date</div><span class="free">Free Task</span><svg class="ok"><use href="#ok"/></svg><svg class="chev"><use href="#chev"/></svg></div>
          </article>
          <div class="conn"><i></i><svg viewBox="0 0 19 11"><path d="M0 0h19L9.500 11z"/></svg></div>
          <article class="card">
            <div class="card-h"><span class="ring"><svg><use href="#lookup"/></svg></span><div class="ttl"><b>Lookup Table :</b> Lookup Table</div><svg class="ok"><use href="#ok"/></svg><svg class="chev"><use href="#chev"/></svg></div>
          </article>
          <div class="conn"><i></i><svg viewBox="0 0 19 11"><path d="M0 0h19L9.500 11z"/></svg></div>
          <article class="card">
            <div class="card-h card-h-open"><span class="ring"><svg><use href="#numf"/></svg></span><div class="ttl"><b>Number Formatter by Pabbly :</b> Spreadsheet Formulas</div><span class="free">Free Task</span><svg class="ok"><use href="#ok"/></svg><svg class="chev"><use href="#chev"/></svg></div>
            <div class="card-b">
              <div class="tabs">
                <span class="dt">Data In</span>
                <span class="dt dt-on">Data Out</span>
                <span class="tabs-r"><span class="stamp">Feb 02, 2023 08:42:01</span><span class="pipe">|</span><span>Simple Format</span><span class="tog"></span></span>
              </div>
              <div class="alert">The response received from the Number Formatter by Pabbly app is shown below:</div>
              <div class="kv kv-first"><span>Type</span><span class="kv-v">spreadsheetFormula</span></div>
              <div class="kv"><span>Result</span><span class="kv-v">+521Error: #N/A</span></div>
            </div>
          </article>
          <div class="conn"><i></i><svg viewBox="0 0 19 11"><path d="M0 0h19L9.500 11z"/></svg></div>
          <article class="card">
            <div class="card-h"><span class="ring"><svg><use href="#gcon"/></svg></span><div class="ttl"><b>Google Contacts :</b> Create Contact with Custom Fields</div><svg class="ok"><use href="#ok"/></svg><svg class="chev"><use href="#chev"/></svg></div>
          </article>
          <div class="conn"><i></i><svg viewBox="0 0 19 11"><path d="M0 0h19L9.500 11z"/></svg></div>
          <article class="card">
            <div class="card-h"><span class="ring"><svg><use href="#api"/></svg></span><div class="ttl"><b>API by Pabbly :</b></div><svg class="ok"><use href="#ok"/></svg><svg class="chev"><use href="#chev"/></svg></div>
          </article>
          <div class="consumed">Consumed 3 Task</div>
        </div>
      </div>
      <div class="dr-scroll"></div>
    </aside>
  </div>
</div>
</body>
</html>
```
FILE: styles.css
```css
* { box-sizing: border-box; }
html, body { margin: 0; padding: 0; height: 100%; overflow: hidden; }
body { font-family: "Lato", "Noto Sans", sans-serif; color: #333; background: #f6f8fc; }
svg { display: block; }
.sprite { width: 0; height: 0; position: absolute; }
.sb { font-family: "Liberation Sans", sans-serif; font-weight: 700; }
.si { font-style: italic; }
a { text-decoration: none; color: inherit; }
h1, h2, p { margin: 0; font-weight: inherit; }

.app { width: 3360px; height: 2100px; display: flex; flex-direction: column; }

/* tab strip */
.tabstrip { height: 84px; padding: 16px 0 0 17px; background: #22381f; display: flex; align-items: center; flex: none; }
.tab { width: 30px; height: 40px; flex: none; border-right: 2px solid #6f8369; display: flex; align-items: center; justify-content: center; }
.fav { width: 18px; height: 32px; flex: none; }
.tab-last-before { border-right-color: transparent; }
.tab-active { width: 62px; align-self: stretch; flex: none; background: #365a30; border-radius: 20px 20px 0 0; display: flex; align-items: center; justify-content: center; position: relative; }
.tab-active::before, .tab-active::after { content: ""; position: absolute; bottom: 0; width: 10px; height: 10px; background: radial-gradient(circle at 0 0, #22381f 10px, #365a30 10.5px); }
.tab-active::before { left: -10px; }
.tab-active::after { right: -10px; transform: scaleX(-1); }
.tab-x { width: 20px; height: 20px; fill: none; stroke: #fff; stroke-width: 2.5; }
.new-tab { width: 24px; height: 24px; margin-left: 39px; fill: none; stroke: #fff; stroke-width: 3.5; }
.tab-caret { width: 18px; height: 12px; margin-left: 135px; fill: none; stroke: #fff; stroke-width: 2.5; }

/* toolbar */
.toolbar { height: 72px; background: #365a30; display: flex; align-items: center; padding: 0 0 0 29px; flex: none; }
.nav { width: 28px; height: 28px; margin-right: 37px; fill: none; stroke: #fff; stroke-width: 3; flex: none; }
.nav-off { stroke: #8fa58a; }
.nav-fill { fill: #fff; stroke: none; }
.omnibox { width: 1711px; height: 56px; margin-left: -8px; border-radius: 28px; background: #2f4a2c; display: flex; align-items: center; padding-left: 27px; flex: none; }
.lock { width: 15px; height: 21px; flex: none; }
.url { margin-left: 26px; font: 400 29.4px "Roboto", sans-serif; color: #fff; white-space: nowrap; }
.url-path { color: #a9b6a6; }
.omni-icons { margin-left: auto; display: flex; align-items: center; gap: 34px; padding-right: 21px; }
.oi { width: 30px; height: 30px; flex: none; }
.ol { fill: none; stroke: #c9cec8; stroke-width: 2.5; }
.ext-pill { width: 1205px; height: 56px; margin-left: 18px; border: 2px solid #4c6e46; border-radius: 28px; display: flex; align-items: center; padding-left: 10px; gap: 32px; flex: none; }
.ext { width: 32px; height: 32px; flex: none; }
.after { margin-left: 22px; }
.avatar { width: 44px; height: 44px; margin-left: 26px; flex: none; }
.dots { width: 8px; height: 32px; margin-left: 40px; fill: #fff; flex: none; }

/* bookmarks */
.bookmarks { height: 66px; padding: 0 0 2px 27px; background: #365a30; border-bottom: 2px solid #5c7c55; display: flex; align-items: center; flex: none; font: 400 25.5px "Roboto", sans-serif; color: #fff; }
.bm { display: flex; align-items: center; gap: 17px; margin-right: 33px; white-space: nowrap; }
.bm-wide { letter-spacing: .35px; }
.bm-i { width: 32px; height: 32px; flex: none; }

/* stage */
.stage { position: relative; flex: 1; display: flex; overflow: hidden; }
.sidebar { width: 202px; background: #202228; flex: none; color: #fff; font-size: 19px; }
.side-item { height: 115px; display: flex; flex-direction: column; align-items: center; padding-top: 21px; gap: 14px; }
.side-i { height: 30px; width: 32px; fill: #fff; flex: none; }
.side-active { background: #2e74f0; }
.main { flex: none; width: 1444px; display: flex; flex-direction: column; overflow: hidden; }
.page-head { height: 163px; background: #fff; padding-left: 662px; box-shadow: 0 1px 2px rgba(0,0,0,.08); white-space: nowrap; flex: none; overflow: hidden; }
.page-head h1 { margin-top: -10px; font-size: 38.6px; line-height: 44px; font-weight: 700; color: #222; margin-bottom: 18px; }
.page-head p { font-size: 21.5px; line-height: 31px; color: #666; }
.content { padding: 60px 0 0 662px; }
.stats { display: flex; gap: 49px; }
.stat { width: 579px; height: 146px; background: #fff; border-radius: 8px; box-shadow: 0 3px 8px rgba(30,50,90,.18); display: flex; align-items: center; gap: 14px; padding-left: 31px; flex: none; }
.stat-ic { width: 84px; height: 84px; border-radius: 50%; display: flex; align-items: center; justify-content: center; flex: none; }
.stat-ic svg { width: 48px; height: 48px; }
.stat-or { background: #fde8c9; }
.stat-bl { background: #cfe0fb; }
.stat-l { font-size: 18.3px; line-height: 26px; color: #555; white-space: nowrap; margin-top: -6px; }
.stat-v { font-size: 36px; line-height: 40px; font-weight: 700; color: #333; }
.table-card { width: 2400px; height: 1445px; margin-top: 44px; background: #fff; border-radius: 8px; box-shadow: 0 3px 8px rgba(30,50,90,.18); }
.table-card h2 { height: 104px; padding: 29px 0 0 30px; font-size: 28px; line-height: 34px; font-weight: 500; color: #222; border-bottom: 3px solid #ebf0f7; }
.row { height: 115.4px; padding: 22px 0 0 30px; border-bottom: 3px solid #ebf0f7; display: grid; grid-template-columns: 69px 231px 231.5px 1fr; align-items: start; }
.row-head { height: 78px; padding-top: 23px; font-size: 21.2px; line-height: 24px; font-weight: 700; color: #333; white-space: nowrap; letter-spacing: -.1px; }
.col-app { margin-left: 2px; }
.cb { width: 24px; height: 24px; margin-top: 7px; border: 1.5px solid #8a8f99; border-radius: 4px; background: #fff; display: block; }
.row-head .cb { margin-top: 4px; }
.d { font-size: 23px; line-height: 28px; color: #333; white-space: nowrap; }
.t { font-size: 19px; line-height: 26px; color: #777; margin-top: 9px; }
.apps { display: flex; margin: 7px 0 0 -1px; }
.ring { width: 59px; height: 60px; border: 1.5px solid #dfe7f7; border-radius: 50%; background: #fff; display: flex; align-items: center; justify-content: center; flex: none; }
.ring svg { width: 40px; height: 40px; }
.apps .ring + .ring { margin-left: -8px; background: none; }
.w { display: block; font-size: 23px; line-height: 28px; color: #3878f6; }
.foot { display: flex; padding: 32px 0 0 30px; align-items: flex-start; }
.sel { width: 88px; height: 36px; border: 1.5px solid #dcdfe4; border-radius: 4px; font-size: 21px; line-height: 30px; padding-left: 12px; color: #666; position: relative; display: block; }
.sel svg { position: absolute; right: 8px; top: 13px; width: 18px; height: 12px; fill: none; stroke: #666; stroke-width: 2; }
.showing { margin: 8px 0 0 16px; font-size: 22px; line-height: 28px; color: #777; white-space: nowrap; }
.scrim { position: absolute; inset: 0; background: rgba(0,0,0,.5); }

/* drawer */
.drawer { position: absolute; top: 0; right: 0; bottom: 0; width: 1714px; display: flex; background: #f3f6fa; }
.drawer-in { flex: 1; min-width: 0; display: flex; flex-direction: column; }
.dr-scroll { width: 13px; flex: none; border-left: 1px solid #c9d5e8; background: #f4f7fd; }
.dr-head { height: 232px; flex: none; background: #fff; border-bottom: 1px solid #d8e3f5; padding: 25px 0 0 54px; position: relative; }
.dr-x { position: absolute; right: 26px; top: 20px; width: 18px; height: 18px; fill: none; stroke: #777; stroke-width: 3; }
.dr-title { font-size: 33.5px; line-height: 40px; font-weight: 700; color: #2e7cf6; }
.dr-id { margin-top: 14px; font-size: 18.5px; line-height: 24px; color: #6c757d; white-space: nowrap; }
.dr-ex { margin-top: 9px; font-size: 19px; line-height: 24px; color: #6c757d; }
.btn { margin-top: 17px; width: 192px; height: 54px; background: #2e7cf6; border: 0; border-radius: 4px; display: flex; align-items: center; padding: 0 0 4px 19px; gap: 11px; color: #fff; font: 500 22.5px "Lato", sans-serif; }
.btn svg { width: 24px; height: 24px; fill: none; stroke: #fff; stroke-width: 2.5; flex: none; }
.btn-f { fill: #fff; stroke: none; }
.dr-body { padding: 54px 53px 0 54px; }
.card { background: #fff; border-radius: 6px; box-shadow: 0 4px 8px rgba(60,80,120,.16); }
.card-h { height: 107px; display: flex; align-items: center; padding: 0 31px 0 31px; }
.card-h-open { border-bottom: 3px solid #f1f6fd; height: 110px; padding-bottom: 3px; }
.ttl { margin: -8px 0 0 16px; font-size: 28px; line-height: 34px; font-weight: 500; color: #6c757d; white-space: nowrap; flex: 1; word-spacing: .5px; }
.ttl b { font-weight: 700; color: #1f2329; }
.free { width: 94px; height: 30px; background: #d8f6e4; border-radius: 4px; color: #4aa564; font-size: 17.5px; line-height: 28px; text-align: center; flex: none; }
.ok { width: 20px; height: 20px; margin: -6px 0 0 25px; flex: none; }
.chev { width: 20px; height: 14px; margin: 0 0 0 24px; flex: none; }
.conn { height: 49px; display: flex; flex-direction: column; align-items: center; }
.conn i { width: 1.5px; height: 34px; background: #c9cdd2; }
.conn svg { width: 19px; height: 11px; fill: #d2d6da; flex: none; }
.card-b { padding: 0 30px 37px 31px; }
.tabs { height: 83px; border-bottom: 3px solid #f1f6fd; display: flex; align-items: stretch; font-size: 23.3px; color: #6c757d; }
.dt { padding: 20px 30px 0; line-height: 32px; margin-bottom: -3px; }
.dt-on { color: #2e7cf6; border-bottom: 3px solid #2e7cf6; }
.tabs-r { margin-left: auto; display: flex; align-items: flex-start; padding-top: 21px; font-size: 23.5px; line-height: 32px; margin-right: 28px; white-space: nowrap; }
.stamp { font-size: 21.4px; }
.pipe { margin: 0 21px; font-size: 21px; }
.tog { width: 42px; height: 24px; border-radius: 12px; background: #2e7cf6; margin: 7px 0 0 29px; position: relative; flex: none; }
.tog::after { content: ""; position: absolute; right: 3px; top: 3px; width: 18px; height: 18px; background: #fff; border-radius: 50%; }
.alert { height: 72px; margin-top: 24px; background: #d9eadb; border: 1px solid #c8e0cb; border-radius: 4px; color: #1f4d22; font-size: 23.6px; line-height: 64px; padding-left: 30px; white-space: nowrap; }
.kv { display: flex; height: 76px; margin: 0 3px; padding: 21px 0 0 15px; font-size: 22px; line-height: 30px; color: #333; }
.kv-first { height: 90px; margin-top: 20px; padding-top: 26px; border-bottom: 2px solid #f1f6fd; }
.kv span:first-child { width: 421px; flex: none; }
.kv-v { color: #6c757d; font-size: 23.5px; }
.consumed { margin-top: 33px; text-align: right; font-size: 23.8px; line-height: 26px; color: #6c757d; }
```
